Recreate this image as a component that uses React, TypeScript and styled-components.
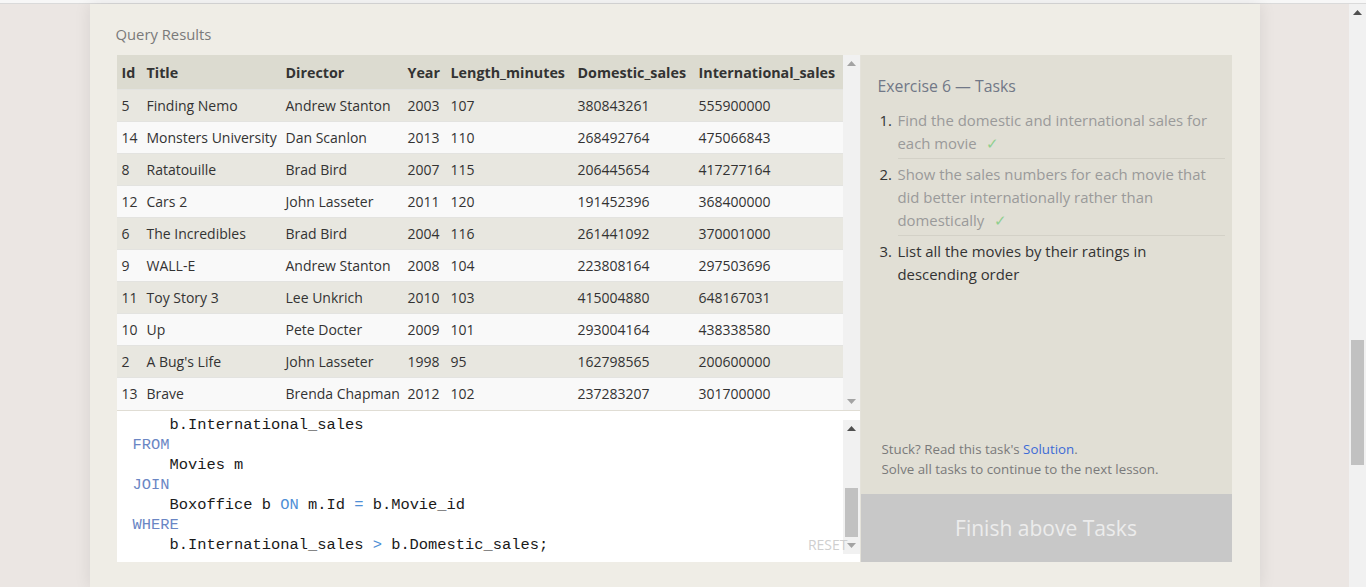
import styled, { createGlobalStyle } from 'styled-components';

const GlobalStyle = createGlobalStyle`
    html, body {
        margin: 0;
        padding: 0;
        background: #ebe6e3;
        overflow: hidden;
    }
    body {
        font-family: "Open Sans", "Noto Sans", sans-serif;
    }
`;

type Movie = [number, string, string, number, number, number, number];

const movies: Movie[] = [
    [5, 'Finding Nemo', 'Andrew Stanton', 2003, 107, 380843261, 555900000],
    [14, 'Monsters University', 'Dan Scanlon', 2013, 110, 268492764, 475066843],
    [8, 'Ratatouille', 'Brad Bird', 2007, 115, 206445654, 417277164],
    [12, 'Cars 2', 'John Lasseter', 2011, 120, 191452396, 368400000],
    [6, 'The Incredibles', 'Brad Bird', 2004, 116, 261441092, 370001000],
    [9, 'WALL-E', 'Andrew Stanton', 2008, 104, 223808164, 297503696],
    [11, 'Toy Story 3', 'Lee Unkrich', 2010, 103, 415004880, 648167031],
    [10, 'Up', 'Pete Docter', 2009, 101, 293004164, 438338580],
    [2, "A Bug's Life", 'John Lasseter', 1998, 95, 162798565, 200600000],
    [13, 'Brave', 'Brenda Chapman', 2012, 102, 237283207, 301700000],
];

const columns = [
    { name: 'Id', width: 25 },
    { name: 'Title', width: 139 },
    { name: 'Director', width: 122 },
    { name: 'Year', width: 43 },
    { name: 'Length_minutes', width: 127 },
    { name: 'Domestic_sales', width: 121 },
    { name: 'International_sales', width: 149 },
];

const Arrow = ({ dir, color }: { dir: 'up' | 'down'; color: string }) => (
    <svg width="9" height="5" viewBox="0 0 9 5">
        {dir === 'up'
            ? <polygon points="0,5 4.5,0 9,5" fill={color} />
            : <polygon points="0,0 9,0 4.5,5" fill={color} />}
    </svg>
);

export default function App() {
    return (
        <Styled.Page>
            <GlobalStyle />
            <Styled.TopStrip />
            <Styled.Frame>
                <Styled.Viewport>
                    <Styled.Container>
                        <Styled.SectionTitle>Query Results</Styled.SectionTitle>
                        <Styled.Main>
                            <Styled.LeftColumn>
                                <Styled.TableBox>
                                    <Styled.TableScroll>
                                        <Styled.Table>
                                            <colgroup>
                                                {columns.map(c => <col key={c.name} style={{ width: c.width }} />)}
                                            </colgroup>
                                            <thead>
                                                <tr>
                                                    {columns.map(c => <Styled.Th key={c.name}>{c.name}</Styled.Th>)}
                                                </tr>
                                            </thead>
                                            <tbody>
                                                {movies.map((m, i) => (
                                                    <Styled.Tr key={m[0]} $odd={i % 2 === 0}>
                                                        {m.map((v, j) => <Styled.Td key={j}>{v}</Styled.Td>)}
                                                    </Styled.Tr>
                                                ))}
                                            </tbody>
                                        </Styled.Table>
                                    </Styled.TableScroll>
                                    <Styled.ScrollTrack>
                                        <Styled.ArrowBox><Arrow dir="up" color="#a3a3a3" /></Styled.ArrowBox>
                                        <Styled.Spacer />
                                        <Styled.ArrowBox><Arrow dir="down" color="#a3a3a3" /></Styled.ArrowBox>
                                    </Styled.ScrollTrack>
                                </Styled.TableBox>
                                <Styled.Editor>
                                    <Styled.Code>
                                        <Styled.Line>{'    '}b.International_sales</Styled.Line>
                                        <Styled.Line><Styled.Kw>FROM</Styled.Kw></Styled.Line>
                                        <Styled.Line>{'    '}Movies m</Styled.Line>
                                        <Styled.Line><Styled.Kw>JOIN</Styled.Kw></Styled.Line>
                                        <Styled.Line>{'    '}Boxoffice b <Styled.Op>ON</Styled.Op> m.Id <Styled.Op>=</Styled.Op> b.Movie_id</Styled.Line>
                                        <Styled.Line><Styled.Kw>WHERE</Styled.Kw></Styled.Line>
                                        <Styled.Line>{'    '}b.International_sales <Styled.Op>&gt;</Styled.Op> b.Domestic_sales;</Styled.Line>
                                    </Styled.Code>
                                    <Styled.EditorScroll>
                                        <Styled.ArrowBox><Arrow dir="up" color="#505050" /></Styled.ArrowBox>
                                        <Styled.Spacer />
                                        <Styled.Thumb />
                                        <Styled.ArrowBox><Arrow dir="down" color="#a3a3a3" /></Styled.ArrowBox>
                                    </Styled.EditorScroll>
                                    <Styled.Reset>RESET</Styled.Reset>
                                </Styled.Editor>
                            </Styled.LeftColumn>
                            <Styled.TaskPanel>
                                <Styled.TaskBody>
                                    <Styled.TaskTitle>Exercise 6 — Tasks</Styled.TaskTitle>
                                    <Styled.TaskList>
                                        <Styled.TaskItem>
                                            <Styled.Num>1.</Styled.Num>
                                            <Styled.TaskText $done>
                                                Find the domestic and international sales for<br />
                                                each movie <Styled.Check>✓</Styled.Check>
                                            </Styled.TaskText>
                                        </Styled.TaskItem>
                                        <Styled.TaskItem>
                                            <Styled.Num>2.</Styled.Num>
                                            <Styled.TaskText $done>
                                                Show the sales numbers for each movie that<br />
                                                did better internationally rather than<br />
                                                domestically <Styled.Check>✓</Styled.Check>
                                            </Styled.TaskText>
                                        </Styled.TaskItem>
                                        <Styled.TaskItem>
                                            <Styled.Num>3.</Styled.Num>
                                            <Styled.TaskText $last>
                                                List all the movies by their ratings in<br />
                                                descending order
                                            </Styled.TaskText>
                                        </Styled.TaskItem>
                                    </Styled.TaskList>
                                    <Styled.Spacer />
                                    <Styled.Hint>
                                        Stuck? Read this task's <Styled.Link>Solution</Styled.Link>.<br />
                                        Solve all tasks to continue to the next lesson.
                                    </Styled.Hint>
                                </Styled.TaskBody>
                                <Styled.FinishButton>Finish above Tasks</Styled.FinishButton>
                            </Styled.TaskPanel>
                        </Styled.Main>
                    </Styled.Container>
                </Styled.Viewport>
                <Styled.PageScroll>
                    <Styled.PageArrow><Arrow dir="up" color="#505050" /></Styled.PageArrow>
                    <Styled.PageThumb />
                </Styled.PageScroll>
            </Styled.Frame>
        </Styled.Page>
    );
}

const Styled = {
    Page: styled.div`
        display: flex;
        flex-direction: column;
        height: 587px;
        overflow: hidden;
    `,
    TopStrip: styled.div`
        height: 3px;
        background: #f7f7f7;
        border-bottom: 1px solid #dadada;
    `,
    Frame: styled.div`
        flex: 1;
        display: flex;
        min-height: 0;
    `,
    Viewport: styled.div`
        flex: 1;
        display: flex;
        justify-content: center;
        min-width: 0;
    `,
    Container: styled.div`
        width: 1170px;
        box-sizing: border-box;
        background: #efede6;
        box-shadow: 0 0 16px rgba(0, 0, 0, 0.09);
        padding: 19px 28px 0 27px;
        display: flex;
        flex-direction: column;
    `,
    SectionTitle: styled.div`
        font-size: 14.8px;
        line-height: 22px;
        color: #7a7a7a;
        margin: 0 0 10px -1px;
    `,
    Main: styled.div`
        display: flex;
        height: 507px;
    `,
    LeftColumn: styled.div`
        width: 743px;
        display: flex;
        flex-direction: column;
        border-right: 1px solid #e4e2da;
    `,
    TableBox: styled.div`
        display: flex;
        height: 355px;
        border-bottom: 1px solid #e0ddd4;
    `,
    TableScroll: styled.div`
        width: 726px;
        overflow: hidden;
        background: #f9f9f9;
    `,
    Table: styled.table`
        width: 726px;
        table-layout: fixed;
        border-collapse: collapse;
        font-size: 14px;
        color: #333;
    `,
    Th: styled.th`
        height: 34px;
        padding: 0 0 0 5px;
        text-align: left;
        font-weight: 700;
        font-size: 14.3px;
        background: #dcdbd0;
        color: #333;
        white-space: nowrap;
    `,
    Tr: styled.tr<{ $odd?: boolean }>`
        background: ${p => (p.$odd ? '#e8e7e0' : '#f9f9f9')};
        border-top: 1px solid #e3e3e0;
    `,
    Td: styled.td`
        height: 31px;
        padding: 0 0 0 5px;
        white-space: nowrap;
        overflow: hidden;
    `,
    ScrollTrack: styled.div`
        width: 17px;
        background: #f1f1f1;
        display: flex;
        flex-direction: column;
        align-items: center;
    `,
    ArrowBox: styled.div`
        height: 17px;
        width: 17px;
        display: flex;
        align-items: center;
        justify-content: center;
    `,
    Spacer: styled.div`
        flex: 1;
    `,
    Editor: styled.div`
        position: relative;
        flex: 1;
        display: flex;
        background: #fff;
    `,
    Code: styled.pre`
        flex: 1;
        margin: 0;
        padding: 4px 0 0 16px;
        font-family: "Liberation Mono", "DejaVu Sans Mono", monospace;
        font-size: 15.4px;
        color: #1a1a1a;
    `,
    Line: styled.div`
        height: 20px;
        line-height: 20px;
    `,
    Kw: styled.span`
        color: #6a86c4;
    `,
    Op: styled.span`
        color: #4f8fd6;
    `,
    EditorScroll: styled.div`
        width: 17px;
        margin: 9px 0 8px;
        background: #f1f1f1;
        display: flex;
        flex-direction: column;
        align-items: center;
    `,
    Thumb: styled.div`
        width: 13px;
        height: 49px;
        background: #c1c1c1;
    `,
    Reset: styled.div`
        position: absolute;
        right: 12px;
        bottom: 8px;
        font-size: 14px;
        color: #cfcfcf;
    `,
    TaskPanel: styled.div`
        width: 371px;
        display: flex;
        flex-direction: column;
        background: #e1dfd5;
    `,
    TaskBody: styled.div`
        flex: 1;
        display: flex;
        flex-direction: column;
        padding: 20px 7px 15px 17px;
    `,
    TaskTitle: styled.div`
        font-size: 15.8px;
        line-height: 22px;
        color: #717887;
        margin-bottom: 8px;
    `,
    TaskList: styled.div`
        display: flex;
        flex-direction: column;
    `,
    TaskItem: styled.div`
        display: flex;
        font-size: 14.9px;
        line-height: 23px;
    `,
    Num: styled.div`
        width: 18px;
        flex-shrink: 0;
        padding: 4px 0 0 2px;
        color: #333;
    `,
    TaskText: styled.div<{ $done?: boolean; $last?: boolean }>`
        flex: 1;
        padding: 4px 0 3px;
        color: ${p => (p.$done ? '#9a9a9a' : '#333')};
        border-bottom: ${p => (p.$last ? 'none' : '1px solid #d3d1c7')};
        white-space: nowrap;
    `,
    Check: styled.span`
        color: #8fcf8f;
        margin-left: 6px;
    `,
    Hint: styled.div`
        font-size: 13.3px;
        line-height: 20px;
        color: #7a7a7a;
        padding-left: 4px;
    `,
    Link: styled.span`
        color: #3d6bd6;
    `,
    FinishButton: styled.div`
        height: 68px;
        display: flex;
        align-items: center;
        justify-content: center;
        background: #c8c8c8;
        color: #ececec;
        font-size: 21px;
    `,
    PageScroll: styled.div`
        width: 17px;
        background: #f1f1f1;
        display: flex;
        flex-direction: column;
        align-items: center;
    `,
    PageArrow: styled.div`
        height: 17px;
        width: 17px;
        display: flex;
        align-items: center;
        justify-content: center;
    `,
    PageThumb: styled.div`
        width: 13px;
        height: 125px;
        margin-top: 319px;
        background: #c1c1c1;
    `,
};
